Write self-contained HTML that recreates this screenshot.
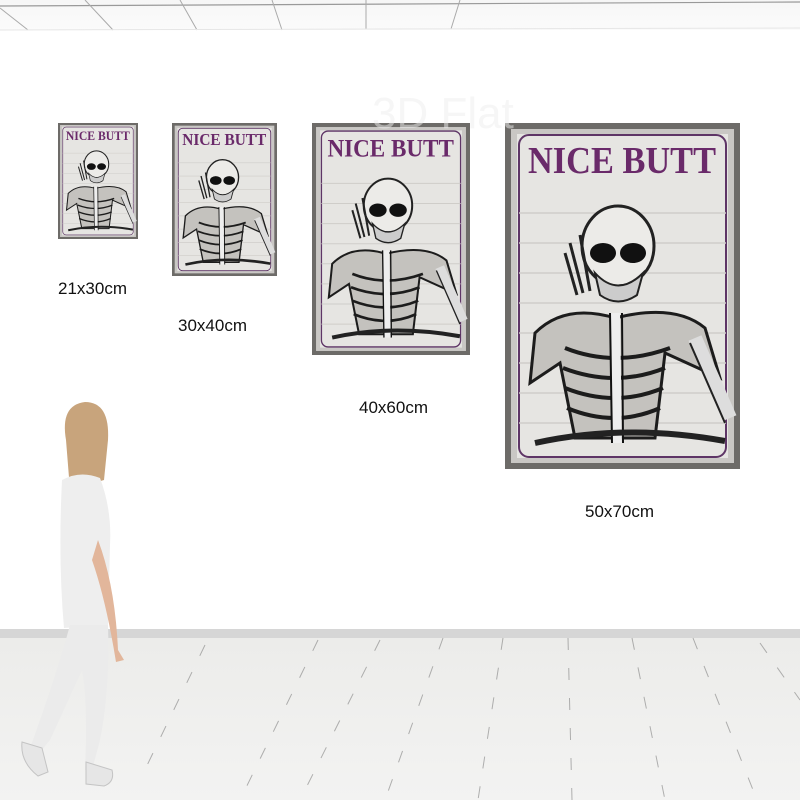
<!DOCTYPE html>
<html><head><meta charset="utf-8"><style>
html,body{margin:0;padding:0;background:#fff;width:800px;height:800px;overflow:hidden}
.lbl{position:absolute;font-family:"Liberation Sans",sans-serif;font-size:17px;color:#111}
svg{position:absolute;left:0;top:0}
</style></head><body>
<svg width="800" height="800" viewBox="0 0 800 800">
<defs>
<linearGradient id="flr" x1="0" y1="0" x2="0" y2="1"><stop offset="0" stop-color="#ececea"/><stop offset="1" stop-color="#f3f3f2"/></linearGradient>
<linearGradient id="ceil" x1="0" y1="0" x2="0" y2="1"><stop offset="0" stop-color="#f6f6f6"/><stop offset="1" stop-color="#fbfbfb"/></linearGradient>
</defs>
<rect x="0" y="0" width="800" height="30" fill="url(#ceil)"/>
<path d="M0 6 L800 2" stroke="#999" stroke-width="1.2"/>
<path d="M0 8 L28 30 M85 0 L113 30 M180 0 L197 30 M272 0 L282 30 M366 0 L366 29 M460 0 L451 29" stroke="#aaa" stroke-width="1" fill="none"/>
<path d="M0 30 L800 28" stroke="#e6e6e6" stroke-width="1"/>
<rect x="0" y="638" width="800" height="162" fill="url(#flr)"/>
<rect x="0" y="629" width="800" height="9" fill="#d6d6d6"/>
<g stroke="#777" stroke-width="1" stroke-dasharray="12 18" fill="none" opacity="0.55">
<path d="M443 638 L385 800"/><path d="M503 638 L478 800"/><path d="M568 638 L572 800"/>
<path d="M632 638 L665 800"/><path d="M693 638 L757 800"/><path d="M760 643 L800 700"/>
<path d="M318 640 L240 800"/><path d="M380 640 L300 800"/><path d="M205 645 L140 780"/>
</g>
<svg x="58" y="123" width="80" height="116" viewBox="0 0 235 346" preserveAspectRatio="none"><g id="p1">
<rect width="235" height="346" fill="#6d6b68"/>
<rect x="6" y="6" width="223" height="334" fill="#c9c7c4"/>
<rect x="12" y="11" width="211" height="324" fill="#e6e5e2"/>
<rect x="14" y="12" width="207" height="322" rx="10" fill="none" stroke="#5e3566" stroke-width="2"/>
<g stroke="#cfcdc9" stroke-width="1.5"><path d="M14 90H221M14 120H221M14 150H221M14 180H221M14 210H221M14 240H221M14 270H221M14 300H221"/></g>
<text x="117" y="50" text-anchor="middle" font-family="Liberation Serif,serif" font-weight="bold" font-size="38" fill="#6a2a6a" textLength="188" lengthAdjust="spacingAndGlyphs">NICE BUTT</text>
<ellipse cx="113" cy="123" rx="36" ry="40" fill="#ecebe8" stroke="#222" stroke-width="3"/>
<ellipse cx="98" cy="130" rx="13" ry="10" fill="#111"/><ellipse cx="128" cy="130" rx="13" ry="10" fill="#111"/>
<path d="M90 150 Q113 175 138 150 L132 172 Q113 185 95 172Z" fill="#ccc" stroke="#222" stroke-width="2"/>
<path d="M65 120 L78 170 M75 112 L85 168 M60 130 L72 172" stroke="#222" stroke-width="3"/>
<path d="M30 210 Q60 180 110 195 Q170 180 200 205 L215 255 L160 230 L150 315 L70 315 L55 240 L25 260Z" fill="#c4c2be" stroke="#1c1c1c" stroke-width="3"/>
<path d="M60 225 Q110 245 165 225 M58 245 Q110 265 160 245 M60 265 Q110 285 158 265 M62 285 Q110 305 155 285" stroke="#1c1c1c" stroke-width="4" fill="none"/>
<path d="M110 190 L112 320" stroke="#eee" stroke-width="10"/><path d="M105 190 L107 320 M117 190 L118 320" stroke="#111" stroke-width="2"/>
<path d="M190 215 L225 295" stroke="#ddd" stroke-width="14"/><path d="M185 220 L220 300" stroke="#222" stroke-width="2"/>
<path d="M30 320 Q120 300 220 318" stroke="#222" stroke-width="6" fill="none"/>
</g></svg>
<svg x="172" y="123" width="105" height="153" viewBox="0 0 235 346" preserveAspectRatio="none"><use href="#p1"/></svg>
<svg x="312" y="123" width="158" height="232" viewBox="0 0 235 346" preserveAspectRatio="none"><use href="#p1"/></svg>
<svg x="505" y="123" width="235" height="346" viewBox="0 0 235 346" preserveAspectRatio="none"><use href="#p1"/></svg>
<g>
<path d="M66 440 Q60 405 85 402 Q110 402 108 440 L104 480 L70 490Z" fill="#c8a47c"/>
<path d="M62 480 Q80 470 100 478 Q112 510 110 545 L108 625 L64 628 Q58 560 62 480Z" fill="#eeeeee"/>
<path d="M98 540 Q115 585 118 650 L124 660 L116 662 Q106 600 92 560Z" fill="#e2b69b"/>
<path d="M70 625 L108 625 Q110 690 100 740 L92 770 L85 770 Q88 700 82 670 L50 740 L40 752 L30 748 Q55 680 70 625Z" fill="#ebebeb"/>
<path d="M86 762 L112 770 Q115 782 104 786 L86 784Z" fill="#e6e6e6" stroke="#c4c4c4"/>
<path d="M22 742 L42 748 L48 772 L38 776 Q20 762 22 742Z" fill="#e6e6e6" stroke="#c4c4c4"/>
</g>
<text x="372" y="128" font-family="Liberation Sans,sans-serif" font-size="44" fill="#eee" opacity="0.5">3D Flat</text>
</svg>
<div class="lbl" style="left:58px;top:279px">21x30cm</div>
<div class="lbl" style="left:178px;top:316px">30x40cm</div>
<div class="lbl" style="left:359px;top:398px">40x60cm</div>
<div class="lbl" style="left:585px;top:502px">50x70cm</div>
</body></html>
